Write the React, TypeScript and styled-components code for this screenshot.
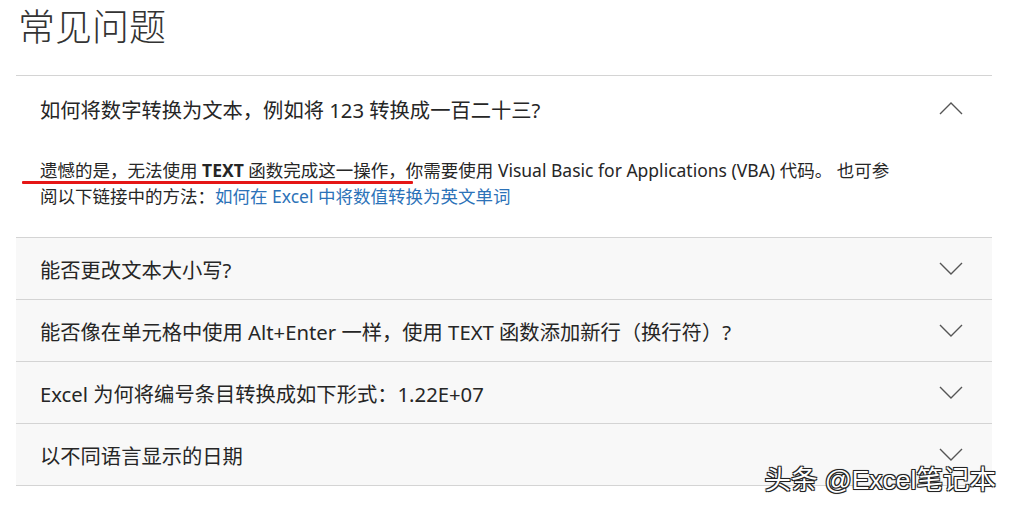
import React, { useState } from "react";
import styled, { createGlobalStyle } from "styled-components";

const GlobalStyle = createGlobalStyle`
  body {
    margin: 0;
    background: #fff;
    font-family: "Noto Sans", "Noto Sans CJK SC", sans-serif;
    color: #2b2b2b;
  }
`;

const Page = styled.div`
  position: relative;
  width: 1009px;
  height: 508px;
  overflow: hidden;
`;

const Title = styled.h1`
  margin: 0 0 25px 18px;
  line-height: 50px;
  font-size: 37px;
  font-weight: 300;
  color: #333;
  font-family: "Noto Sans CJK SC", sans-serif;
`;

const List = styled.div`
  margin: 0 17px 0 16px;
  border-bottom: 1px solid #d4d4d4;
`;

const Item = styled.div<{ $open: boolean }>`
  border-top: 1px solid #d4d4d4;
  background: ${(p) => (p.$open ? "#fff" : "#f8f8f8")};
`;

const Header = styled.div<{ $tall: boolean }>`
  display: flex;
  align-items: center;
  justify-content: space-between;
  height: ${(p) => (p.$tall ? 65 : 61)}px;
  padding: 0 29px 0 24px;
  cursor: pointer;
`;

const Question = styled.span`
  font-size: 20.3px;
  color: #262626;
`;

const ChevronSvg = styled.svg`
  display: block;
  flex-shrink: 0;
`;

const Answer = styled.p`
  position: relative;
  margin: 16px 0 0;
  padding: 0 90px 28px 24px;
  font-size: 17.5px;
  line-height: 26px;
  color: #262626;

  b {
    font-weight: 700;
  }
`;

const AnswerLink = styled.a`
  color: #2c72b8;
  text-decoration: none;
`;

const RedMark = styled.span`
  position: absolute;
  left: 6px;
  top: 24px;
  width: 391px;
  height: 3px;
  background: #e51616;
  border-radius: 1px;
`;

const Watermark = styled.div`
  position: absolute;
  right: 13px;
  bottom: 14px;
  font-size: 26.5px;
  line-height: 28px;
  color: #fff;
  font-family: "Liberation Sans", "Noto Sans CJK SC", sans-serif;
  text-shadow: -1px -1px 0 #222, 1px -1px 0 #222, -1px 1px 0 #222,
    1px 1px 0 #222, 0 0 2px #000;
`;

type Faq = {
  q: string;
  a?: React.ReactNode;
};

const faqs: Faq[] = [
  {
    q: "如何将数字转换为文本，例如将 123 转换成一百二十三?",
    a: (
      <>
        遗憾的是，无法使用 <b>TEXT</b> 函数完成这一操作，你需要使用 Visual Basic for
        Applications (VBA) 代码。 也可参阅以下链接中的方法：
        <AnswerLink href="#">如何在 Excel 中将数值转换为英文单词</AnswerLink>
      </>
    ),
  },
  { q: "能否更改文本大小写?" },
  { q: "能否像在单元格中使用 Alt+Enter 一样，使用 TEXT 函数添加新行（换行符）?" },
  { q: "Excel 为何将编号条目转换成如下形式：1.22E+07" },
  { q: "以不同语言显示的日期" },
];

const Chevron: React.FC<{ up: boolean }> = ({ up }) => (
  <ChevronSvg width="24" height="13" viewBox="0 0 24 13">
    <polyline
      points={up ? "1,12 12,1 23,12" : "1,1 12,12 23,1"}
      fill="none"
      stroke="#555"
      strokeWidth="1.4"
    />
  </ChevronSvg>
);

const App: React.FC = () => {
  const [open, setOpen] = useState(0);

  return (
    <Page>
      <GlobalStyle />
      <Title>常见问题</Title>
      <List>
        {faqs.map((f, i) => (
          <Item key={i} $open={open === i}>
            <Header $tall={i === 0} onClick={() => setOpen(open === i ? -1 : i)}>
              <Question>{f.q}</Question>
              <Chevron up={open === i} />
            </Header>
            {open === i && f.a && (
              <Answer>
                {f.a}
                {i === 0 && <RedMark />}
              </Answer>
            )}
          </Item>
        ))}
      </List>
      <Watermark>头条 @Excel笔记本</Watermark>
    </Page>
  );
};

export default App;
